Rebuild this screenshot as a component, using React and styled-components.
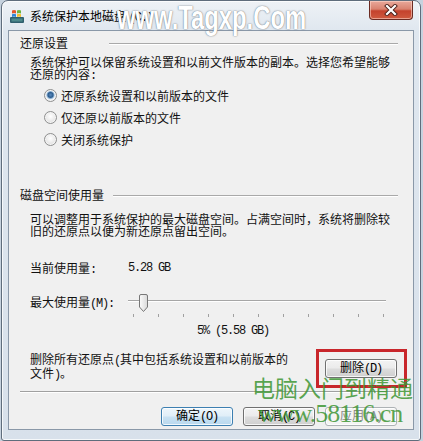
import styled, { createGlobalStyle } from "styled-components";

const GlobalStyle = createGlobalStyle`
  html, body { margin: 0; padding: 0; }
  body {
    width: 423px;
    height: 441px;
    overflow: hidden;
    background: #c6d2de;
    font-family: "Noto Sans CJK SC", "Noto Sans", sans-serif;
    color: #111;
  }
`;

const Window = styled.div`
  position: relative;
  box-sizing: border-box;
  width: 420px;
  height: 441px;
  margin-left: 1px;
  border: 1px solid #5f6d7c;
  border-radius: 7px 7px 3px 3px;
  background: linear-gradient(180deg, #eef2f6 0%, #dfe7ef 30px, #d8e1eb 100%);
  box-shadow: inset 0 0 0 1px rgba(255, 255, 255, 0.75);
  display: flex;
  flex-direction: column;
  padding: 0 6px 10px 6px;
`;

const TitleBar = styled.div`
  height: 29px;
  margin: 0 -6px;
  padding: 0 7px;
  display: flex;
  align-items: center;
  gap: 5px;
`;

const Title = styled.div`
  flex: 1;
  font-size: 12px;
  line-height: 14px;
  margin-top: 3px;
  color: #000;
  white-space: nowrap;
`;

const CloseButton = styled.div`
  align-self: flex-start;
  box-sizing: border-box;
  width: 44px;
  height: 19px;
  border: 1px solid #6b2b22;
  border-top: none;
  border-radius: 0 0 4px 4px;
  background: linear-gradient(180deg, #e9a99b 0%, #d9826f 45%, #c4422d 55%, #cf5a3f 100%);
  box-shadow: inset 0 0 0 1px rgba(255, 220, 210, 0.55);
  display: flex;
  align-items: center;
  justify-content: center;
`;

const Client = styled.div`
  flex: 1;
  border: 1px solid #8a98a8;
  background: #f0f0f0;
  padding: 5px 15px 0 11px;
  display: flex;
  flex-direction: column;
  font-size: 12px;
`;

const Heading = styled.div`
  display: flex;
  align-items: center;
  height: 14px;
  line-height: 14px;
  white-space: nowrap;
  margin-top: ${(p) => p.$top || 0}px;
`;

const Rule = styled.div`
  flex: 1;
  height: 1px;
  background: #a9a9a9;
  box-shadow: 0 1px 0 #ffffff;
  margin-left: ${(p) => p.$gap}px;
  margin-top: 1px;
`;

const Section = styled.div`
  padding-left: 10px;
  display: flex;
  flex-direction: column;
`;

const Para = styled.div`
  line-height: ${(p) => p.$lh || 12}px;
  white-space: nowrap;
  margin-top: ${(p) => p.$top || 0}px;
`;

const Half = styled.span`
  font-family: "Liberation Mono", monospace;
  letter-spacing: -1.2px;
`;

const RadioList = styled.div`
  margin-top: 2px;
  display: flex;
  flex-direction: column;
`;

const RadioRow = styled.label`
  height: 22px;
  display: flex;
  align-items: center;
  gap: 4px;
  padding-left: 14px;
  white-space: nowrap;
`;

const RadioDot = styled.span`
  box-sizing: border-box;
  width: 13px;
  height: 13px;
  border-radius: 50%;
  border: 1px solid #8e8f8f;
  background: ${(p) =>
    p.$checked
      ? "radial-gradient(circle at 50% 45%, #5a8cc0 0, #2e5d8e 2.5px, #8fb4d6 3.6px, #e9eef3 4.5px, #f6f6f6 100%)"
      : "radial-gradient(circle at 50% 40%, #ffffff 0, #f1f1f1 3px, #d5d5d5 100%)"};
  box-shadow: inset 0 0 0 1px #f4f4f4;
`;

const ValueRow = styled.div`
  display: flex;
  align-items: flex-start;
  margin-top: ${(p) => p.$top}px;
  line-height: 14px;
  white-space: nowrap;
`;

const Label = styled.div`
  width: 98px;
  margin-top: ${(p) => p.$shift || 0}px;
`;

const Slider = styled.div`
  width: 258px;
  display: flex;
  flex-direction: column;
`;

const TrackArea = styled.div`
  position: relative;
  height: 18px;
`;

const Track = styled.div`
  margin-top: 6px;
  height: 1px;
  background: #a6a6a6;
  box-shadow: 0 1px 0 #ffffff;
`;

const Thumb = styled.svg`
  position: absolute;
  top: 0;
`;

const Ticks = styled.div`
  margin-top: 2px;
  height: 3px;
  padding: 0 2px 0 5px;
  display: flex;
  justify-content: space-between;
`;

const Tick = styled.div`
  width: 1px;
  height: 3px;
  background: #a0a0a0;
`;

const Percent = styled.div`
  margin-top: 6px;
  line-height: 12px;
  padding-left: 69px;
`;

const DeleteRow = styled.div`
  margin-top: 12px;
  margin-right: -9px;
  display: flex;
  justify-content: space-between;
  align-items: flex-start;
`;

const Marked = styled.div`
  border: 3px solid #c8262b;
  padding: 6px 7px 7px 6px;
`;

const Separator = styled.div`
  margin-top: 3px;
  height: 1px;
  background: #a0a0a0;
  box-shadow: 0 1px 0 #ffffff;
`;

const ButtonRow = styled.div`
  margin-top: 15px;
  display: flex;
  justify-content: flex-end;
  gap: 10px;
  padding-right: 1px;
`;

const Button = styled.button`
  box-sizing: border-box;
  width: 72px;
  height: 19px;
  padding: 0;
  font-family: "Noto Sans CJK SC", sans-serif;
  font-size: 12px;
  line-height: 1;
  color: ${(p) => (p.disabled ? "#8a8a8a" : "#000")};
  border: 1px solid
    ${(p) => (p.$primary ? "#3c7fb1" : p.disabled ? "#adb2b5" : "#707070")};
  border-radius: 3px;
  background: ${(p) =>
    p.$primary
      ? "linear-gradient(180deg, #edf6fc 0%, #e0eef8 48%, #c9e2f3 52%, #b9d8ee 100%)"
      : p.disabled
      ? "#f4f4f4"
      : "linear-gradient(180deg, #f3f3f3 0%, #ebebeb 48%, #dddddd 52%, #cfcfcf 100%)"};
  box-shadow: inset 0 0 0 1px rgba(255, 255, 255, 0.8);
`;

const TopMark = styled.div`
  position: absolute;
  left: 115px;
  top: -1px;
  font-family: "Liberation Sans", sans-serif;
  font-weight: 700;
  font-size: 34px;
  line-height: 1;
  color: #ffffff;
  transform: scaleX(0.7);
  transform-origin: left top;
  text-shadow: 0 0 2px rgba(60, 70, 80, 0.6), 0 0 1px rgba(60, 70, 80, 0.5);
  white-space: nowrap;
  pointer-events: none;
`;

const GreenMark = styled.div`
  position: absolute;
  left: ${(p) => p.$x}px;
  top: ${(p) => p.$y}px;
  font-family: ${(p) => (p.$latin ? '"Liberation Serif", serif' : '"Noto Sans CJK SC", sans-serif')};
  font-size: ${(p) => p.$size}px;
  letter-spacing: ${(p) => (p.$latin ? "-1px" : "0")};
  line-height: 1;
  color: rgba(62, 150, 52, 0.85);
  white-space: nowrap;
  pointer-events: none;
`;

function AppIcon() {
  return (
    <svg width="16" height="16" viewBox="0 0 16 16">
      <rect x="1" y="9" width="14" height="6" rx="1" fill="#2f5f6e" />
      <rect x="2.5" y="10.5" width="11" height="3" fill="#4d8a8c" />
      <path d="M3 2.5 Q5 1.5 7 2.5 V5.5 Q5 4.5 3 5.5 Z" fill="#e2572b" />
      <path d="M8 2.5 Q10 1.5 12 2.5 V5.5 Q10 4.5 8 5.5 Z" fill="#6cb33f" />
      <path d="M3 6.3 Q5 5.3 7 6.3 V9 Q5 8 3 9 Z" fill="#2f86d6" />
      <path d="M8 6.3 Q10 5.3 12 6.3 V9 Q10 8 8 9 Z" fill="#f5c02a" />
    </svg>
  );
}

function CloseGlyph() {
  return (
    <svg width="14" height="12" viewBox="0 0 14 12">
      <path d="M3 2 L11 10 M11 2 L3 10" stroke="#4a1f18" strokeWidth="4" strokeLinecap="square" />
      <path d="M3 2 L11 10 M11 2 L3 10" stroke="#ffffff" strokeWidth="2.2" strokeLinecap="square" />
    </svg>
  );
}

function ThumbShape({ left }) {
  return (
    <Thumb width="11" height="19" viewBox="0 0 11 19" style={{ left }}>
      <defs>
        <linearGradient id="tg" x1="0" x2="1" y1="0" y2="0">
          <stop offset="0" stopColor="#fbfbfb" />
          <stop offset="1" stopColor="#d9d9d9" />
        </linearGradient>
      </defs>
      <path
        d="M1.5 2 Q1.5 0.5 3 0.5 H8 Q9.5 0.5 9.5 2 V13 L5.5 17.5 L1.5 13 Z"
        fill="url(#tg)"
        stroke="#777777"
      />
    </Thumb>
  );
}

const options = [
  { text: "还原系统设置和以前版本的文件", checked: true },
  { text: "仅还原以前版本的文件", checked: false },
  { text: "关闭系统保护", checked: false },
];

export default function App() {
  const percent = 5;
  return (
    <>
      <GlobalStyle />
      <Window>
        <TitleBar>
          <AppIcon />
          <Title>
            系统保护本地磁盘 <Half>(C:)</Half>
          </Title>
          <CloseButton>
            <CloseGlyph />
          </CloseButton>
        </TitleBar>
        <Client>
          <Heading>
            还原设置
            <Rule $gap={41} />
          </Heading>
          <Section>
            <Para $top={6}>
              系统保护可以保留系统设置和以前文件版本的副本。选择您希望能够
              <br />
              还原的内容<Half>:</Half>
            </Para>
            <RadioList>
              {options.map((o) => (
                <RadioRow key={o.text}>
                  <RadioDot $checked={o.checked} />
                  {o.text}
                </RadioRow>
              ))}
            </RadioList>
          </Section>
          <Heading $top={38}>
            磁盘空间使用量
            <Rule $gap={9} />
          </Heading>
          <Section>
            <Para $top={11}>
              可以调整用于系统保护的最大磁盘空间。占满空间时，系统将删除较
              <br />
              旧的还原点以便为新还原点留出空间。
            </Para>
            <ValueRow $top={24}>
              <Label>
                当前使用量<Half>:</Half>
              </Label>
              <Half>5.28 GB</Half>
            </ValueRow>
            <ValueRow $top={17}>
              <Label $shift={1}>
                最大使用量<Half>(M):</Half>
              </Label>
              <Slider>
                <TrackArea>
                  <Track />
                  <ThumbShape left={percent * 2} />
                </TrackArea>
                <Ticks>
                  {Array.from({ length: 11 }).map((_, i) => (
                    <Tick key={i} />
                  ))}
                </Ticks>
                <Percent>
                  <Half>5% (5.58 GB)</Half>
                </Percent>
              </Slider>
            </ValueRow>
            <DeleteRow>
              <Para $top={4} $lh={11}>
                删除所有还原点<Half>(</Half>其中包括系统设置和以前版本的
                <br />
                文件<Half>)</Half>。
              </Para>
              <Marked>
                <Button>
                  删除<Half>(D)</Half>
                </Button>
              </Marked>
            </DeleteRow>
          </Section>
          <Separator />
          <ButtonRow>
            <Button $primary>
              确定<Half>(O)</Half>
            </Button>
            <Button>
              取消<Half>(C)</Half>
            </Button>
            <Button disabled>
              应用<Half>(A)</Half>
            </Button>
          </ButtonRow>
        </Client>
        <TopMark>www.Tagxp.Com</TopMark>
        <GreenMark $x={250} $y={375} $size={23}>
          电脑入门到精通
        </GreenMark>
        <GreenMark $x={256} $y={400} $size={26} $latin>
          www.58116.cn
        </GreenMark>
      </Window>
    </>
  );
}
